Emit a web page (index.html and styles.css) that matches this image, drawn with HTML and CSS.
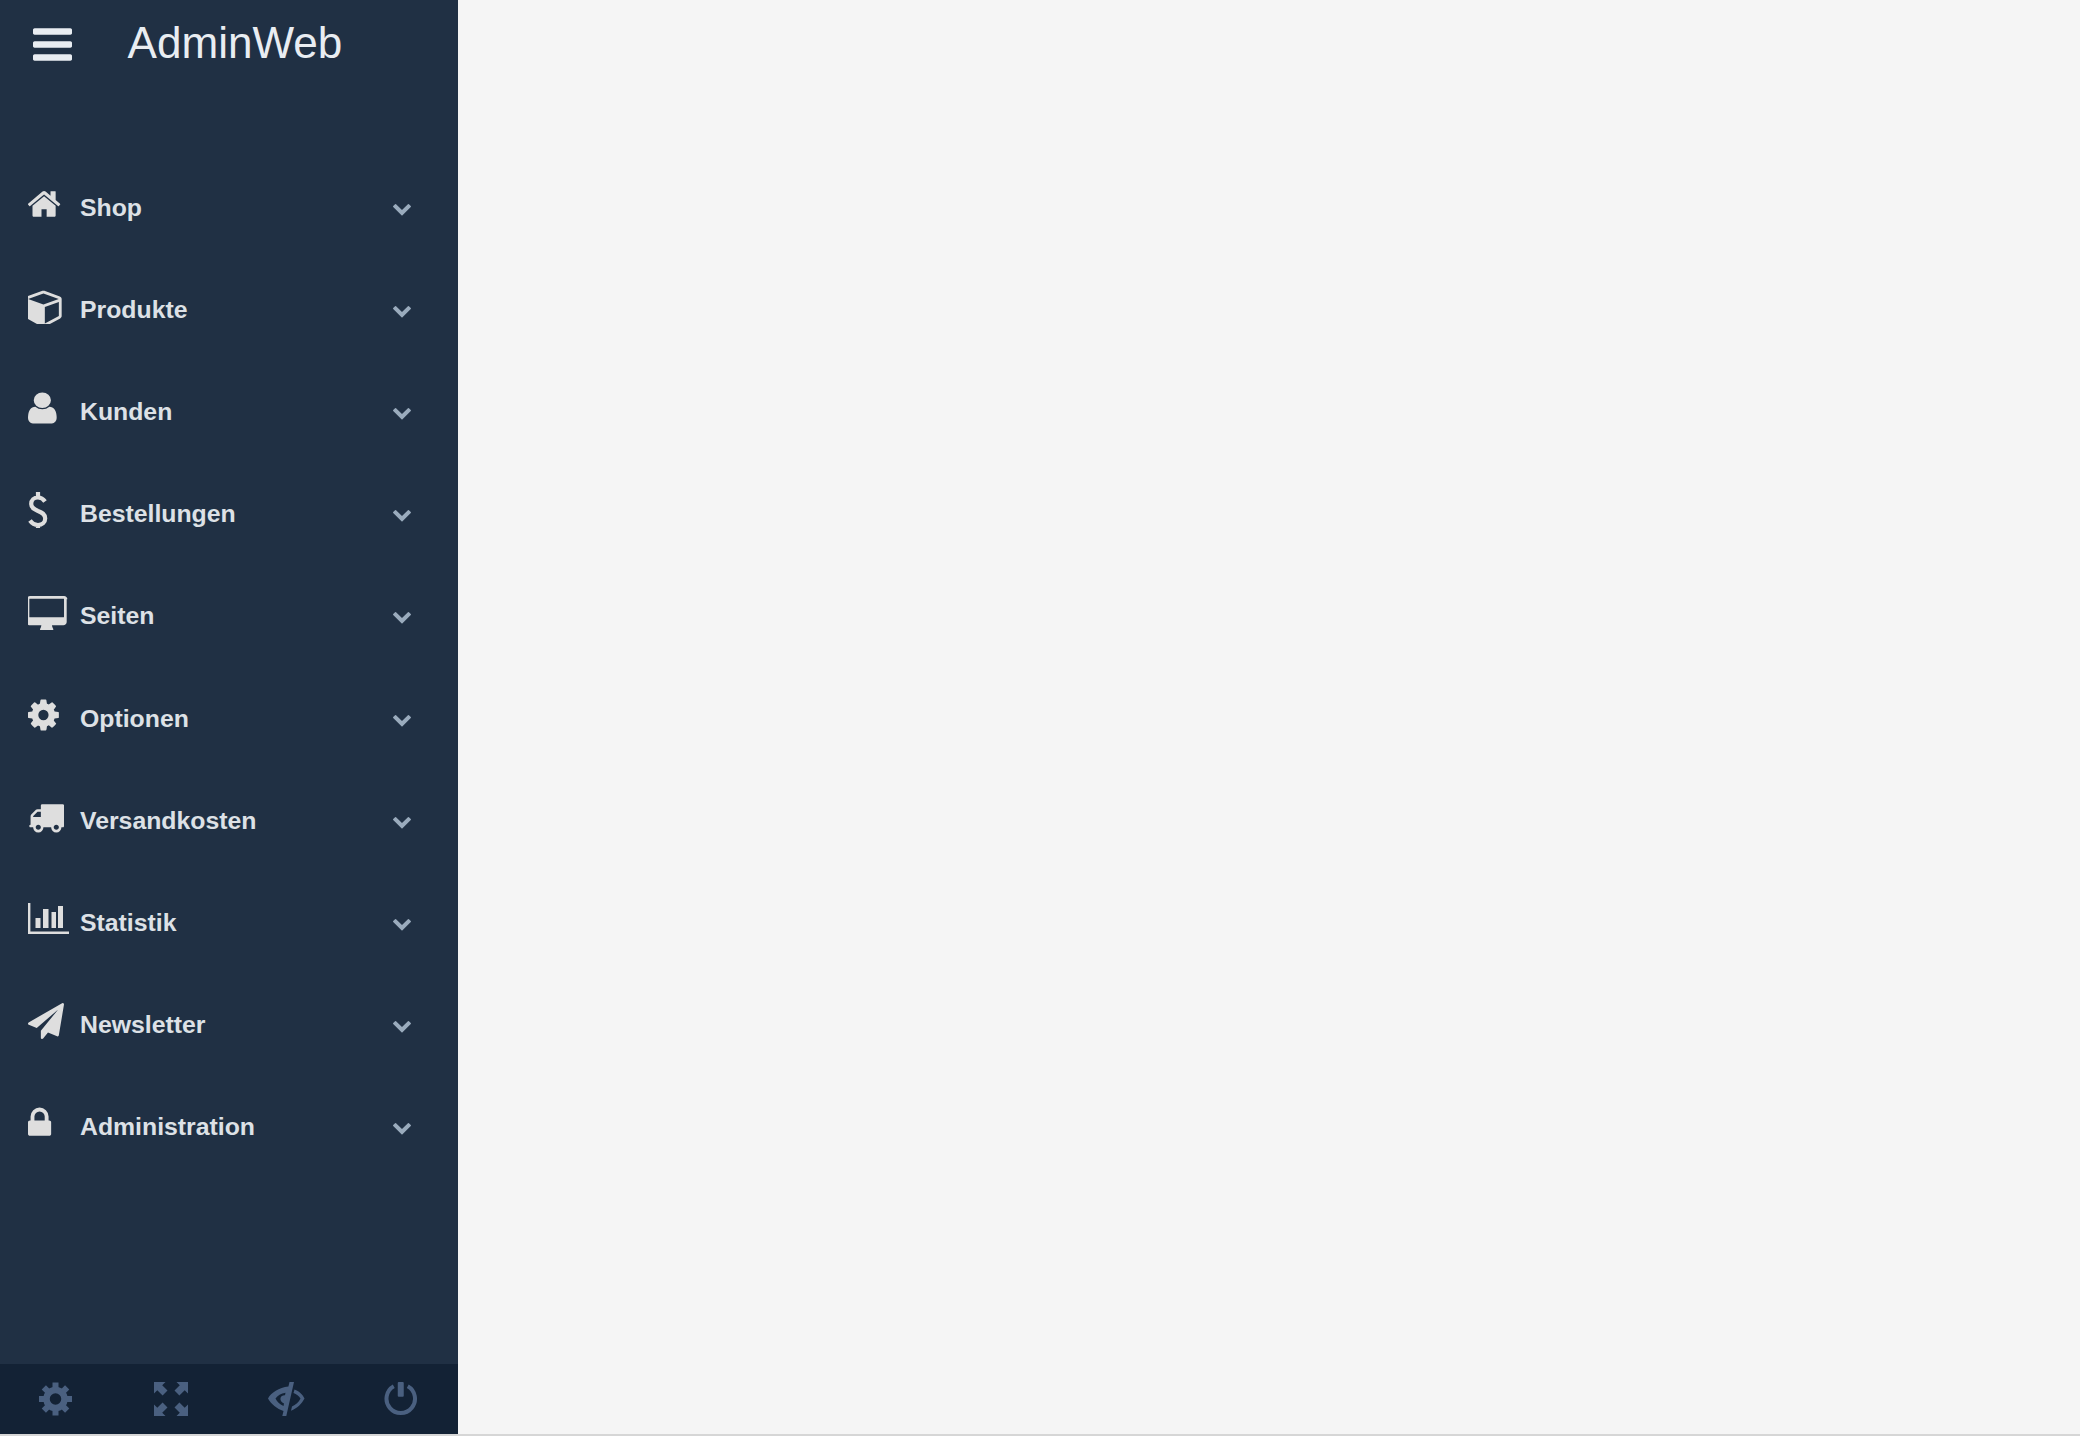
FILE: index.html
```html
<!DOCTYPE html>
<html lang="de">
<head>
    <meta charset="UTF-8">
    <title>AdminWeb</title>
    <link rel="stylesheet" href="styles.css">
</head>
<body>
<svg class="sprite" xmlns="http://www.w3.org/2000/svg">
    <symbol id="i-chevron" viewBox="0 0 1792 1792"><path d="M1683 808l-742 741q-19 19-45 19t-45-19l-742-741q-19-19-19-45.5t19-45.5l166-165q19-19 45-19t45 19l531 531 531-531q19-19 45-19t45 19l166 165q19 19 19 45.5t-19 45.5z"/></symbol>
</svg>
<div class="layout">
    <aside class="sidebar">
        <div class="brand">
            <svg class="burger" viewBox="128 256 1536 1280"><path d="M1664 1344v128q0 26-19 45t-45 19h-1408q-26 0-45-19t-19-45v-128q0-26 19-45t45-19h1408q26 0 45 19t19 45zm0-512v128q0 26-19 45t-45 19h-1408q-26 0-45-19t-19-45v-128q0-26 19-45t45-19h1408q26 0 45 19t19 45zm0-512v128q0 26-19 45t-45 19h-1408q-26 0-45-19t-19-45v-128q0-26 19-45t45-19h1408q26 0 45 19t19 45z"/></svg>
            <span class="brand-name">AdminWeb</span>
        </div>

        <ul class="menu">
            <li class="menu-item">
                <svg class="menu-icon" viewBox="96 0 2240 1792" preserveAspectRatio="xMinYMid meet"><path d="M1472 992v480q0 26-19 45t-45 19h-384v-384h-256v384h-384q-26 0-45-19t-19-45v-480q0-1 .5-3t.5-3l575-474 575 474q1 2 1 6zm223-69l-62 74q-8 9-21 11h-3q-13 0-21-7l-692-577-692 577q-12 8-24 7-13-2-21-11l-62-74q-8-10-7-23.5t11-21.5l719-599q32-26 76-26t76 26l244 204v-195q0-14 9-23t23-9h192q14 0 23 9t9 23v408l219 182q10 8 11 21.5t-7 23.5z"/></svg>
                <span class="menu-label">Shop</span>
                <svg class="chevron"><use href="#i-chevron"/></svg>
            </li>
            <li class="menu-item">
                <svg class="menu-icon" viewBox="128 6 2053 1642" preserveAspectRatio="xMinYMid meet"><path d="M896 1629l640-349v-636l-640 233v752zm-64-865l698-254-698-254-698 254zm832-252v768q0 35-18 65t-49 47l-704 384q-28 16-61 16t-61-16l-704-384q-31-17-49-47t-18-65v-768q0-40 23-73t61-47l704-256q22-8 44-8t44 8l704 256q38 14 61 47t23 73z"/></svg>
                <span class="menu-label">Produkte</span>
                <svg class="chevron"><use href="#i-chevron"/></svg>
            </li>
            <li class="menu-item">
                <svg class="menu-icon" viewBox="256 0 2009 1792" preserveAspectRatio="none"><path d="M1536 1399q0 109-62.5 187t-150.5 78h-854q-88 0-150.5-78t-62.5-187q0-85 8.5-160.5t31.5-152 58.5-131 94-89 134.5-34.5q131 128 313 128t313-128q76 0 134.5 34.5t94 89 58.5 131 31.5 152 8.5 160.5zm-256-887q0 159-112.5 271.5t-271.5 112.5-271.5-112.5-112.5-271.5 112.5-271.5 271.5-112.5 271.5 112.5 112.5 271.5z"/></svg>
                <span class="menu-label">Kunden</span>
                <svg class="chevron"><use href="#i-chevron"/></svg>
            </li>
            <li class="menu-item">
                <svg class="menu-icon" viewBox="0 0 45 36"><path class="dollar" d="M17 9.500C15 6.500 12.500 5.500 10 5.500 6 5.500 3.200 8 3.200 12 3.200 16 6.500 17.500 10 19 14 20.500 17.200 22 17.200 26.500 17.200 30.500 14 33 10 33 7 33 4 31.500 2 28.500M10 0V5.500M10 32.500V36"/></svg>
                <span class="menu-label">Bestellungen</span>
                <svg class="chevron"><use href="#i-chevron"/></svg>
            </li>
            <li class="menu-item">
                <svg class="menu-icon" viewBox="0 -95 2158 1727" preserveAspectRatio="xMinYMid meet"><path d="M1728 992v-832q0-13-9.5-22.5t-22.5-9.5h-1600q-13 0-22.5 9.5t-9.5 22.5v832q0 13 9.5 22.5t22.5 9.5h1600q13 0 22.5-9.5t9.5-22.5zm128-832v1088q0 66-47 113t-113 47h-544q0 37 16 77.5t32 71 16 43.5q0 26-19 45t-45 19h-512q-26 0-45-19t-19-45q0-14 16-44t32-70 16-78h-544q-66 0-113-47t-47-113v-1088q0-66 47-113t113-47h1632q66 0 113 47t47 113z"/></svg>
                <span class="menu-label">Seiten</span>
                <svg class="chevron"><use href="#i-chevron"/></svg>
            </li>
            <li class="menu-item">
                <svg class="menu-icon" viewBox="128 0 2240 1792" preserveAspectRatio="xMinYMid meet"><path d="M1152 896q0-106-75-181t-181-75-181 75-75 181 75 181 181 75 181-75 75-181zm512-109v222q0 12-8 23t-20 13l-185 28q-19 54-39 91 35 50 107 138 10 12 10 25t-9 23q-27 37-99 108t-94 71q-12 0-26-9l-138-108q-44 23-91 38-16 136-29 186-7 28-36 28h-222q-14 0-24.5-8.5t-11.5-21.5l-28-184q-49-16-90-37l-141 107q-10 9-25 9-14 0-25-11-126-114-165-168-7-10-7-23 0-12 8-23 15-21 51-66.5t54-70.5q-27-50-41-99l-183-27q-13-2-21-12.5t-8-23.5v-222q0-12 8-23t19-13l186-28q14-46 39-92-40-57-107-138-10-12-10-24 0-10 9-23 26-36 98.5-107.5t94.5-71.5q13 0 26 10l138 107q44-23 91-38 16-136 29-186 7-28 36-28h222q14 0 24.5 8.5t11.5 21.5l28 184q49 16 90 37l142-107q9-9 24-9 13 0 25 10 129 119 165 170 7 8 7 22 0 12-8 23-15 21-51 66.5t-54 70.5q26 50 41 98l183 28q13 2 21 12.5t8 23.5z"/></svg>
                <span class="menu-label">Optionen</span>
                <svg class="chevron"><use href="#i-chevron"/></svg>
            </li>
            <li class="menu-item">
                <svg class="menu-icon" viewBox="0 0 2240 1792" preserveAspectRatio="xMinYMid meet"><path d="M640 1408q0-52-38-90t-90-38-90 38-38 90 38 90 90 38 90-38 38-90zm-384-512h384v-256h-158q-13 0-22 9l-195 195q-9 9-9 22v30zm1280 512q0-52-38-90t-90-38-90 38-38 90 38 90 90 38 90-38 38-90zm256-1088v1024q0 15-4 26.5t-13.5 18.5-16.5 11.5-23.5 6-22.5 2-25.5 0-22.5-.5q0 106-75 181t-181 75-181-75-75-181h-384q0 106-75 181t-181 75-181-75-75-181h-64q-3 0-22.5.5t-25.5 0-22.5-2-23.5-6-16.5-11.5-13.5-18.5-4-26.5q0-26 19-45t45-19v-320q0-8-.5-35t0-38 2.5-34.5 6.5-37 14-30.5 22.5-30l198-198q19-19 50.5-32t58.5-13h160v-192q0-26 19-45t45-19h1024q26 0 45 19t19 45z"/></svg>
                <span class="menu-label">Versandkosten</span>
                <svg class="chevron"><use href="#i-chevron"/></svg>
            </li>
            <li class="menu-item">
                <svg class="menu-icon" viewBox="0 -2 45 36"><path d="M0 0h2.400v28.600h38.600v2.400h-41zM7.500 15h5v10h-5zM15 6h5.500v19h-5.500zM23.500 9h4.500v16h-4.500zM30 3h5v22h-5z"/></svg>
                <span class="menu-label">Statistik</span>
                <svg class="chevron"><use href="#i-chevron"/></svg>
            </li>
            <li class="menu-item">
                <svg class="menu-icon" viewBox="0 0 2240 1792" preserveAspectRatio="xMinYMid meet"><path d="M1764 11q33 24 27 64l-256 1536q-5 29-32 45-14 8-31 8-11 0-24-5l-453-185-242 295q-18 23-49 23-13 0-22-4-19-7-30.5-23.5t-11.5-36.5v-349l864-1059-1069 925-395-162q-37-14-40-55-2-40 32-59l1664-960q15-9 32-9 20 0 36 11z"/></svg>
                <span class="menu-label">Newsletter</span>
                <svg class="chevron"><use href="#i-chevron"/></svg>
            </li>
            <li class="menu-item">
                <svg class="menu-icon" viewBox="320 0 2240 1792" preserveAspectRatio="xMinYMid meet"><path d="M640 768h512v-192q0-106-75-181t-181-75-181 75-75 181v192zm832 96v576q0 40-28 68t-68 28h-960q-40 0-68-28t-28-68v-576q0-40 28-68t68-28h32v-192q0-184 132-316t316-132 316 132 132 316v192h32q40 0 68 28t28 68z"/></svg>
                <span class="menu-label">Administration</span>
                <svg class="chevron"><use href="#i-chevron"/></svg>
            </li>
        </ul>

        <div class="sidebar-footer">
            <svg class="foot-icon" viewBox="0 0 34 34">
                <circle class="gear-ring" cx="16.500" cy="17" r="9"/>
                <g class="gear-teeth">
                    <path d="M16.500 .5v33"/>
                    <path d="M16.500 .5v33" transform="rotate(45 16.500 17)"/>
                    <path d="M16.500 .5v33" transform="rotate(90 16.500 17)"/>
                    <path d="M16.500 .5v33" transform="rotate(135 16.500 17)"/>
                </g>
            </svg>
            <svg class="foot-icon" viewBox="0 0 34 34"><path d="M0 0h11.500l-3.300 3.300 5.300 5.300-4.900 4.900-5.300-5.300-3.300 3.300zM34 0v11.500l-3.300-3.300-5.300 5.300-4.900-4.900 5.300-5.300-3.300-3.300zM0 34v-11.500l3.300 3.300 5.300-5.300 4.900 4.900-5.300 5.300 3.300 3.300zM34 34h-11.500l3.300-3.300-5.300-5.300 4.900-4.900 5.300 5.300 3.300-3.300z"/></svg>
            <svg class="foot-icon foot-icon-eye" viewBox="0 0 37 34"><path fill-rule="evenodd" d="M21.500 0H26L18.300 34H14.300L15.500 29C9 27 3 22 0 16.500 3 11 11 5.500 20.400 4.600ZM17.500 10.700C13 11.200 9.500 13.500 7.500 16.500 9 19.500 11.500 22 15.500 24L16 21.500C13.500 20.500 12 18.500 12.500 16 13 14 15 13 17 13.200Z"/><path d="M26.500 7.500C31 9 35 13 36.500 16.500 34 21.500 29 26.500 23 28.700L24 24.500C27.500 23 31 20 32.500 16.500 31 14 28.500 12 25.500 11Z"/></svg>
            <svg class="foot-icon foot-icon-power" viewBox="0 0 33 34"><path class="power" d="M9.250 4.350A14.250 14.250 0 1 0 23.250 4.350"/><rect x="13.250" y="0" width="6" height="14.700" rx="1"/></svg>
        </div>
    </aside>
    <main class="content"></main>
</div>
</body>
</html>
```

FILE: styles.css
```css
html, body {
    margin: 0;
    padding: 0;
    height: 100%;
}

body {
    font-family: "Liberation Sans", Arial, sans-serif;
    background: #f5f5f5;
    overflow: hidden;
}

.sprite {
    display: none;
}

.layout {
    display: flex;
    height: 1434px;
    border-bottom: 2px solid #d6d6d6;
}

.sidebar {
    width: 458px;
    background: #203044;
    display: flex;
    flex-direction: column;
}

.content {
    flex: 1;
}

/* Brand row */
.brand {
    height: 156.6px;
    display: flex;
    align-items: flex-start;
    padding: 15px 0 0 33px;
    box-sizing: border-box;
    color: #e9edf2;
}

.burger {
    width: 39px;
    height: 33px;
    margin-top: 13px;
    fill: #e9edf2;
    flex: none;
}

.brand-name {
    font-size: 44.1px;
    line-height: 56px;
    margin-left: 55.5px;
}

/* Menu */
.menu {
    list-style: none;
    margin: 0;
    padding: 0;
    flex: 1;
}

.menu-item {
    height: 102.2px;
    display: flex;
    align-items: center;
    padding-left: 28px;
    color: #dde1e6;
}

.menu-icon {
    width: 45px;
    height: 36px;
    margin: 0 7px 8px 0;
    fill: #dedede;
    flex: none;
}

.dollar {
    fill: none;
    stroke: #dedede;
    stroke-width: 4.2;
}

.menu-label {
    font-size: 24.8px;
    font-weight: 700;
    flex: 1;
}

.chevron {
    width: 20px;
    height: 20px;
    margin: 0 46px 0 0;
    fill: #9aabbd;
}

/* Bottom buttons */
.sidebar-footer {
    height: 70px;
    background: #132235;
    display: flex;
    align-items: center;
    gap: 81px;
    padding-left: 39px;
}

.foot-icon {
    width: 34px;
    height: 34px;
    fill: #4a6080;
    flex: none;
}

.foot-icon-eye {
    width: 37px;
    margin: 0 -3px 0 -1px;
}

.foot-icon-power {
    margin-left: 1px;
}

.gear-ring {
    fill: none;
    stroke: #4a6080;
    stroke-width: 6.5;
}

.gear-teeth path {
    fill: none;
    stroke: #4a6080;
    stroke-width: 6;
    stroke-dasharray: 6 21 6;
}

.power {
    fill: none;
    stroke: #4a6080;
    stroke-width: 4;
}
```
